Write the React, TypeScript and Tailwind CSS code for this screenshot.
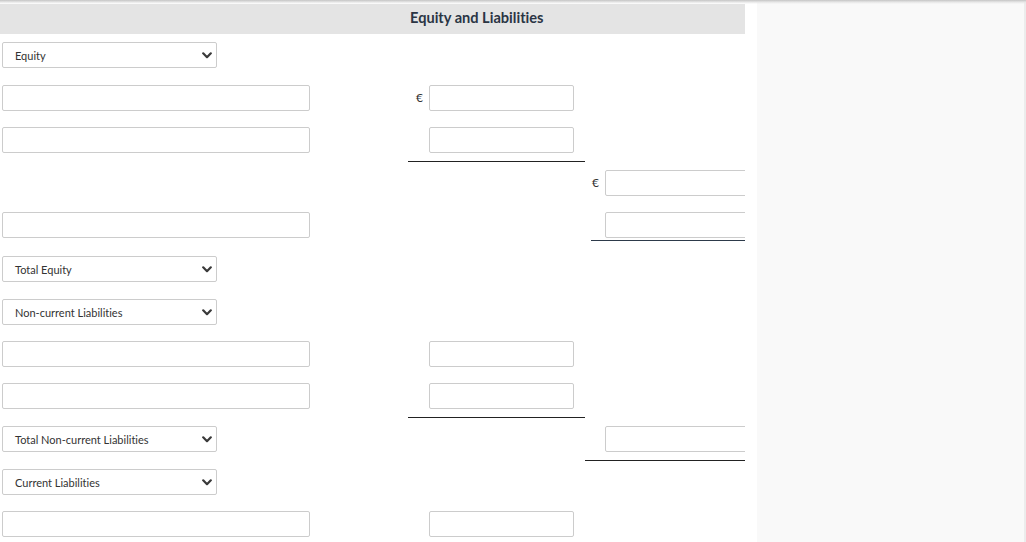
import React from "react";

const Chevron = () => (
  <svg width="10" height="7" viewBox="0 0 10 7" className="shrink-0">
    <polyline points="1.2,1.3 5,5.2 8.8,1.3" fill="none" stroke="#3a3a3a" strokeWidth="2.2" strokeLinecap="round" strokeLinejoin="round" />
  </svg>
);

const Select = ({ label }: { label: string }) => (
  <div className="ml-[2px] w-[215px] h-[26px] border border-[#cccccc] rounded-[2px] bg-white flex items-center justify-between pl-[12px] pr-[4px]">
    <span className="text-[11px] text-[#333333] leading-none">{label}</span>
    <Chevron />
  </div>
);

const LeftInput = () => (
  <div className="ml-[2px] w-[308px] h-[26px] border border-[#cccccc] rounded-[2px] bg-white" />
);

const MidCell = ({ euro, input }: { euro?: boolean; input?: boolean }) => (
  <div className="flex items-start">
    <span className="w-[21px] pr-[6px] text-right text-[12px] leading-[25px] text-[#333333]">{euro ? "€" : ""}</span>
    {input && <div className="w-[145px] h-[26px] border border-[#cccccc] rounded-[2px] bg-white" />}
  </div>
);

const RightCell = ({ euro, input }: { euro?: boolean; input?: boolean }) => (
  <div className="flex items-start overflow-hidden">
    <span className="w-[20px] shrink-0 pr-[6px] text-right text-[12px] leading-[25px] text-[#333333]">{euro ? "€" : ""}</span>
    {input && <div className="w-[150px] shrink-0 h-[26px] border border-[#cccccc] rounded-[2px] bg-white" />}
  </div>
);

const cols = "grid grid-cols-[408px_177px_160px]";

export default function App() {
  return (
    <div className="relative w-[1026px] h-[542px] overflow-hidden bg-white font-['Lato',sans-serif] [font-variant-ligatures:none]">
      <div className="flex h-full">
        <div className="w-[745px] shrink-0 overflow-hidden pt-[4px]">
          <div className={`${cols} h-[30px] bg-[#e4e4e4] items-center`}>
            <div />
            <div className="pl-[2px] pb-[3px] text-[14.6px] leading-[18px] font-bold text-[#2b3544] whitespace-nowrap">Equity and Liabilities</div>
            <div />
          </div>

          {/* Row 1 */}
          <div className={`${cols} h-[43px] pt-[8px]`}>
            <Select label="Equity" />
            <div />
            <div />
          </div>
          {/* Row 2 */}
          <div className={`${cols} h-[42px] pt-[8px]`}>
            <LeftInput />
            <MidCell euro input />
            <div />
          </div>
          {/* Row 3 */}
          <div className={`${cols} h-[43px]`}>
            <div className="pt-[8px]"><LeftInput /></div>
            <div className="pt-[8px] border-b border-[#222222]"><MidCell input /></div>
            <div />
          </div>
          {/* Row 4 */}
          <div className={`${cols} h-[42px] pt-[8px]`}>
            <div />
            <div />
            <RightCell euro input />
          </div>
          {/* Row 5 */}
          <div className={`${cols} h-[44px] pt-[8px]`}>
            <LeftInput />
            <div />
            <div className="flex items-start">
              <div className="ml-[6px] flex-1 overflow-hidden border-b border-[#2d3a4a] pt-0 pb-[2px]">
                <div className="ml-[14px] w-[150px] h-[26px] border border-[#cccccc] rounded-[2px] bg-white" />
              </div>
            </div>
          </div>
          {/* Row 6 */}
          <div className={`${cols} h-[43px] pt-[8px]`}>
            <Select label="Total Equity" />
            <div />
            <div />
          </div>
          {/* Row 7 */}
          <div className={`${cols} h-[42px] pt-[8px]`}>
            <Select label="Non-current Liabilities" />
            <div />
            <div />
          </div>
          {/* Row 8 */}
          <div className={`${cols} h-[42px] pt-[8px]`}>
            <LeftInput />
            <MidCell input />
            <div />
          </div>
          {/* Row 9 */}
          <div className={`${cols} h-[43px]`}>
            <div className="pt-[8px]"><LeftInput /></div>
            <div className="pt-[8px] border-b border-[#222222]"><MidCell input /></div>
            <div />
          </div>
          {/* Row 10 */}
          <div className={`${cols} h-[43px]`}>
            <div className="pt-[8px]"><Select label="Total Non-current Liabilities" /></div>
            <div />
            <div className="pt-[8px] border-b border-[#222222]"><RightCell input /></div>
          </div>
          {/* Row 11 */}
          <div className={`${cols} h-[42px] pt-[8px]`}>
            <Select label="Current Liabilities" />
            <div />
            <div />
          </div>
          {/* Row 12 */}
          <div className={`${cols} h-[42px] pt-[8px]`}>
            <LeftInput />
            <MidCell input />
            <div />
          </div>
        </div>
        <div className="w-[12px] shrink-0 bg-white" />
        <div className="flex-1 bg-[#f9f9f9] border-r-2 border-[#ececec]" />
      </div>
      <div className="absolute top-0 left-0 right-0 h-[4px] bg-gradient-to-b from-[#c4c4c4] via-[#e6e6e6] to-transparent" />
    </div>
  );
}
